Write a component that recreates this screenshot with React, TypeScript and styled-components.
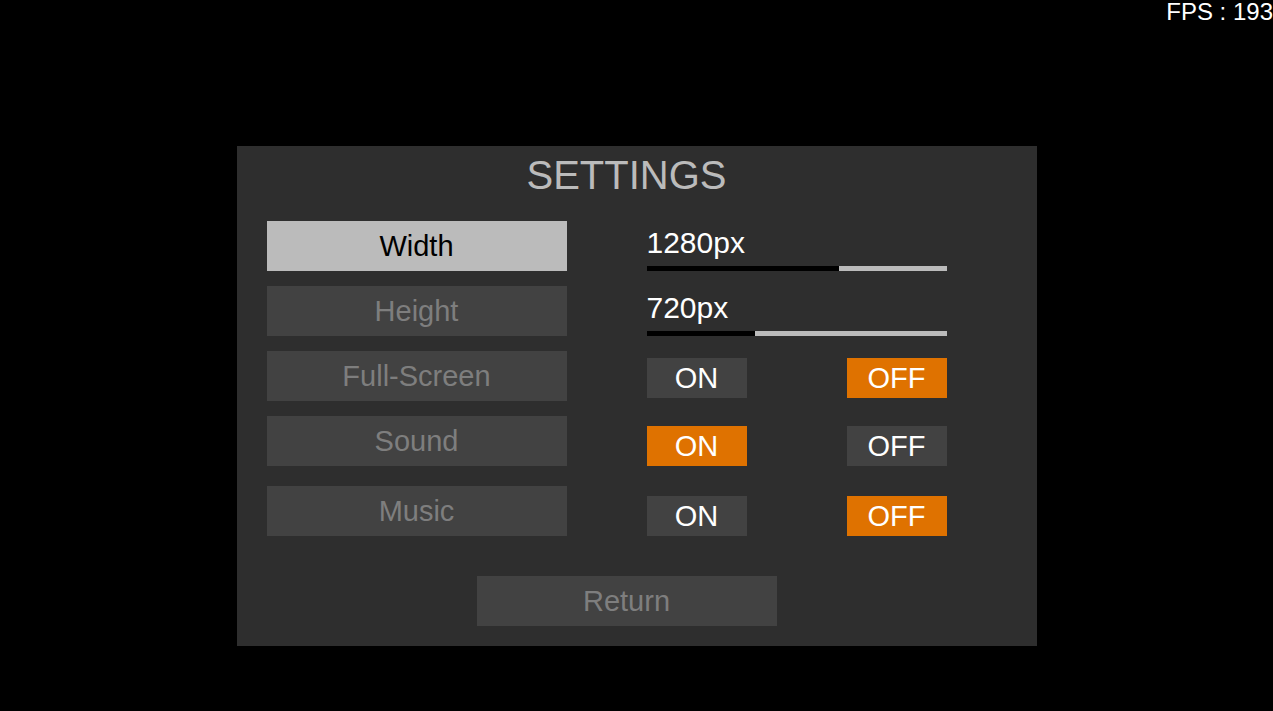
import React from "react";
import styled, { createGlobalStyle } from "styled-components";

const Global = createGlobalStyle`
  html, body {
    margin: 0;
    padding: 0;
    background: #000000;
    font-family: "Liberation Sans", Arial, sans-serif;
  }
  #root {
    min-height: 711px;
  }
`;

const Screen = styled.div`
  position: relative;
  width: 100%;
  min-height: 711px;
  background: #000000;
  overflow: hidden;
`;

const Fps = styled.div`
  position: absolute;
  top: 0;
  right: 0;
  color: #ffffff;
  font-size: 24px;
  line-height: 24px;
  white-space: nowrap;
`;

const Panel = styled.div`
  width: 800px;
  height: 500px;
  box-sizing: border-box;
  margin: 146px auto 0;
  background: #2e2e2e;
  padding: 6px 50px 20px 30px;
  display: flex;
  flex-direction: column;
`;

const Title = styled.h1`
  margin: 0;
  font-weight: normal;
  font-size: 40px;
  line-height: 46px;
  color: #bbbbbb;
  text-align: center;
`;

const Rows = styled.div`
  display: flex;
  flex-direction: column;
  margin-top: 23px;
`;

const Row = styled.div<{ $gapBefore?: number }>`
  display: grid;
  grid-template-columns: 300px 300px;
  column-gap: 80px;
  height: 50px;
  margin-top: ${(p) => p.$gapBefore ?? 0}px;
`;

const Label = styled.div<{ $active?: boolean }>`
  height: 50px;
  background: ${(p) => (p.$active ? "#bbbbbb" : "#424242")};
  color: ${(p) => (p.$active ? "#000000" : "#7e7e7e")};
  font-size: 29px;
  line-height: 50px;
  text-align: center;
`;

const SliderCell = styled.div`
  display: flex;
  flex-direction: column;
  justify-content: flex-end;
`;

const Value = styled.div`
  color: #ffffff;
  font-size: 30px;
  line-height: 34px;
  margin-bottom: 6px;
`;

const Track = styled.div`
  height: 5px;
  background: #bbbbbb;
  display: flex;
`;

const Fill = styled.div`
  height: 100%;
  background: #000000;
`;

const ToggleCell = styled.div<{ $lift?: number }>`
  display: flex;
  justify-content: space-between;
  align-items: flex-end;
  padding-bottom: ${(p) => p.$lift ?? 0}px;
`;

const Toggle = styled.div<{ $on?: boolean }>`
  width: 100px;
  height: 40px;
  background: ${(p) => (p.$on ? "#df7200" : "#424242")};
  color: #ffffff;
  font-size: 29px;
  line-height: 40px;
  text-align: center;
`;

const ReturnButton = styled.div`
  width: 300px;
  height: 50px;
  margin: 40px auto 0;
  background: #424242;
  color: #7e7e7e;
  font-size: 29px;
  line-height: 50px;
  text-align: center;
`;

function Slider({ value, ratio }: { value: string; ratio: number }) {
  return (
    <SliderCell>
      <Value>{value}</Value>
      <Track>
        <Fill style={{ width: `${ratio * 100}%` }} />
      </Track>
    </SliderCell>
  );
}

function OnOff({ on, lift }: { on: boolean; lift?: number }) {
  return (
    <ToggleCell $lift={lift}>
      <Toggle $on={on}>ON</Toggle>
      <Toggle $on={!on}>OFF</Toggle>
    </ToggleCell>
  );
}

export default function App() {
  return (
    <Screen>
      <Global />
      <Fps>FPS : 193</Fps>
      <Panel>
        <Title>SETTINGS</Title>
        <Rows>
          <Row>
            <Label $active>Width</Label>
            <Slider value="1280px" ratio={0.64} />
          </Row>
          <Row $gapBefore={15}>
            <Label>Height</Label>
            <Slider value="720px" ratio={0.36} />
          </Row>
          <Row $gapBefore={15}>
            <Label>Full-Screen</Label>
            <OnOff on={false} lift={3} />
          </Row>
          <Row $gapBefore={15}>
            <Label>Sound</Label>
            <OnOff on={true} />
          </Row>
          <Row $gapBefore={20}>
            <Label>Music</Label>
            <OnOff on={false} />
          </Row>
        </Rows>
        <ReturnButton>Return</ReturnButton>
      </Panel>
    </Screen>
  );
}
